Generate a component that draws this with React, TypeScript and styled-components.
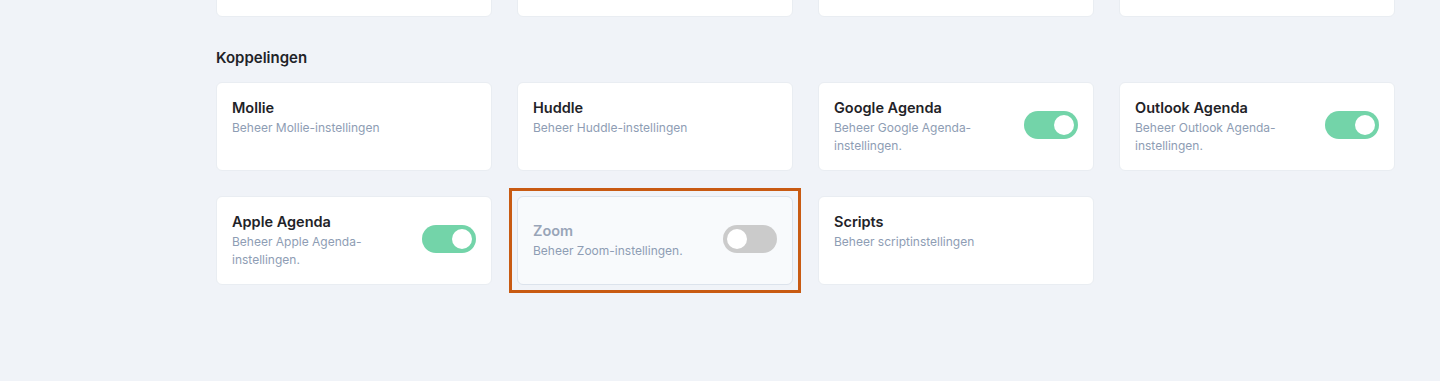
import styled, { createGlobalStyle } from "styled-components";

const GlobalStyle = createGlobalStyle`
  html, body {
    margin: 0;
    padding: 0;
    background-color: #f0f3f8;
    font-family: Inter, "Noto Sans", "Liberation Sans", sans-serif;
    -webkit-font-smoothing: antialiased;
  }
`;

const Page = styled.div`
  margin-top: -72px;
  padding: 0 46px 0 216px;
  height: 453px;
  overflow: hidden;
`;

const Grid = styled.div`
  display: grid;
  grid-template-columns: repeat(4, 276px);
  column-gap: 25px;
  row-gap: 25px;
`;

const SectionTitle = styled.h2`
  margin: 32px 0 15px;
  font-size: 15px;
  line-height: 18px;
  font-weight: 600;
  color: #1f2328;
`;

const Card = styled.div<{ $disabled?: boolean }>`
  position: relative;
  box-sizing: border-box;
  height: 89px;
  padding: 16px 15px 16px 15px;
  display: flex;
  justify-content: space-between;
  align-items: ${(p) => (p.$disabled ? "center" : "flex-start")};
  gap: 12px;
  background-color: ${(p) => (p.$disabled ? "#f8fafc" : "#ffffff")};
  border: 1px solid ${(p) => (p.$disabled ? "#dce3ec" : "#e9edf2")};
  border-radius: 6px;

  &::after {
    content: "";
    display: ${(p) => (p.$disabled ? "block" : "none")};
    position: absolute;
    inset: -9px;
    border: 3px solid #c85a12;
    pointer-events: none;
  }
`;

const Texts = styled.div`
  display: flex;
  flex-direction: column;
  gap: 3px;
  max-width: 180px;
`;

const Title = styled.div<{ $disabled?: boolean }>`
  font-size: 14.5px;
  line-height: 17px;
  font-weight: 600;
  color: ${(p) => (p.$disabled ? "#98a5b8" : "#1f2328")};
`;

const Subtitle = styled.div`
  font-size: 12px;
  line-height: 18px;
  color: #8e9db4;
`;

const Switch = styled.div<{ $on: boolean }>`
  flex: none;
  align-self: center;
  margin-top: -3px;
  width: 54px;
  height: 28px;
  border-radius: 14px;
  padding: 4px;
  box-sizing: border-box;
  display: flex;
  justify-content: ${(p) => (p.$on ? "flex-end" : "flex-start")};
  background-color: ${(p) => (p.$on ? "#73d4a9" : "#cbcbcb")};
`;

const Knob = styled.span`
  width: 20px;
  height: 20px;
  border-radius: 50%;
  background-color: #ffffff;
`;

type Integration = {
  name: string;
  description: string;
  toggle?: boolean;
  disabled?: boolean;
};

const integrations: Integration[] = [
  { name: "Mollie", description: "Beheer Mollie-instellingen" },
  { name: "Huddle", description: "Beheer Huddle-instellingen" },
  { name: "Google Agenda", description: "Beheer Google Agenda-instellingen.", toggle: true },
  { name: "Outlook Agenda", description: "Beheer Outlook Agenda-instellingen.", toggle: true },
  { name: "Apple Agenda", description: "Beheer Apple Agenda-instellingen.", toggle: true },
  { name: "Zoom", description: "Beheer Zoom-instellingen.", toggle: false, disabled: true },
  { name: "Scripts", description: "Beheer scriptinstellingen" },
];

const App = () => {
  return (
    <>
      <GlobalStyle />
      <Page>
        <Grid>
          <Card />
          <Card />
          <Card />
          <Card />
        </Grid>
        <SectionTitle>Koppelingen</SectionTitle>
        <Grid>
          {integrations.map((item) => (
            <Card key={item.name} $disabled={item.disabled}>
              <Texts>
                <Title $disabled={item.disabled}>{item.name}</Title>
                <Subtitle>{item.description}</Subtitle>
              </Texts>
              {item.toggle !== undefined ? (
                <Switch $on={item.toggle}>
                  <Knob />
                </Switch>
              ) : null}
            </Card>
          ))}
        </Grid>
      </Page>
    </>
  );
};

export default App;
